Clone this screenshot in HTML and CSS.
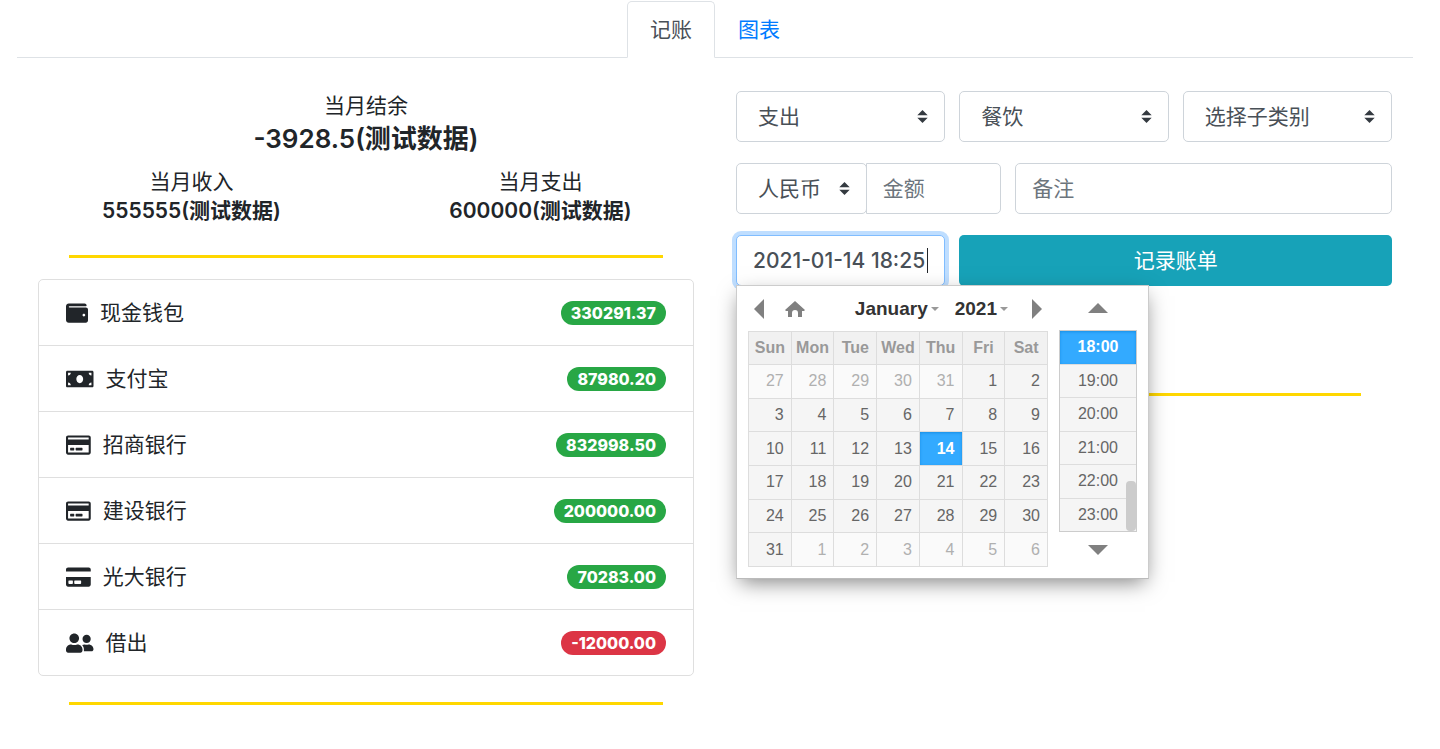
FILE: index.html
```html
<!DOCTYPE html>
<html lang="zh-CN">
<head>
  <meta charset="UTF-8">
  <meta name="viewport" content="width=device-width, initial-scale=1">
  <title>记账</title>
  <link rel="stylesheet" href="styles.css">
</head>
<body>

<nav class="nav-tabs">
  <a class="nav-link active" href="#bill">记账</a>
  <a class="nav-link" href="#chart">图表</a>
</nav>

<main class="row">
  <section class="col">
    <div class="stat">
      <div>当月结余</div>
      <h4>-3928.5(测试数据)</h4>
    </div>
    <div class="stat-row">
      <div class="stat">
        <div>当月收入</div>
        <h5>555555(测试数据)</h5>
      </div>
      <div class="stat">
        <div>当月支出</div>
        <h5>600000(测试数据)</h5>
      </div>
    </div>

    <hr>

    <ul class="list-group">
      <li>
        <svg class="icon" viewBox="0 0 512 512"><path d="M461.2 128H80c-8.84 0-16-7.16-16-16s7.16-16 16-16h384c8.84 0 16-7.16 16-16 0-26.51-21.49-48-48-48H64C28.65 32 0 60.65 0 96v320c0 35.35 28.65 64 64 64h397.2c28.02 0 50.8-21.53 50.8-48V176c0-26.47-22.78-48-50.8-48zM416 336c-17.67 0-32-14.33-32-32s14.33-32 32-32 32 14.33 32 32-14.33 32-32 32z"/></svg>
        <span>现金钱包</span>
        <span class="badge">330291.37</span>
      </li>
      <li>
        <svg class="icon" viewBox="0 0 640 512"><path d="M608 64H32C14.33 64 0 78.33 0 96v320c0 17.67 14.33 32 32 32h576c17.67 0 32-14.33 32-32V96c0-17.67-14.33-32-32-32zM48 400v-64c35.35 0 64 28.65 64 64H48zm0-224v-64h64c0 35.35-28.65 64-64 64zm272 176c-44.19 0-80-42.99-80-96 0-53.02 35.82-96 80-96s80 42.98 80 96c0 53.03-35.83 96-80 96zm272 48h-64c0-35.35 28.65-64 64-64v64zm0-224c-35.35 0-64-28.65-64-64h64v64z"/></svg>
        <span>支付宝</span>
        <span class="badge">87980.20</span>
      </li>
      <li>
        <svg class="icon" viewBox="0 0 576 512"><path d="M527.9 32H48.1C21.5 32 0 53.5 0 80v352c0 26.5 21.5 48 48.1 48h479.8c26.6 0 48.1-21.5 48.1-48V80c0-26.5-21.5-48-48.1-48zM54.1 80h467.8c3.3 0 6 2.7 6 6v42H48.1V86c0-3.3 2.7-6 6-6zm467.8 352H54.1c-3.3 0-6-2.7-6-6V256h479.8v170c0 3.3-2.7 6-6 6zM192 332v40c0 6.6-5.4 12-12 12h-72c-6.6 0-12-5.4-12-12v-40c0-6.6 5.4-12 12-12h72c6.6 0 12 5.4 12 12zm192 0v40c0 6.6-5.4 12-12 12H236c-6.6 0-12-5.4-12-12v-40c0-6.6 5.4-12 12-12h136c6.6 0 12 5.4 12 12z"/></svg>
        <span>招商银行</span>
        <span class="badge">832998.50</span>
      </li>
      <li>
        <svg class="icon" viewBox="0 0 576 512"><path d="M527.9 32H48.1C21.5 32 0 53.5 0 80v352c0 26.5 21.5 48 48.1 48h479.8c26.6 0 48.1-21.5 48.1-48V80c0-26.5-21.5-48-48.1-48zM54.1 80h467.8c3.3 0 6 2.7 6 6v42H48.1V86c0-3.3 2.7-6 6-6zm467.8 352H54.1c-3.3 0-6-2.7-6-6V256h479.8v170c0 3.3-2.7 6-6 6zM192 332v40c0 6.6-5.4 12-12 12h-72c-6.6 0-12-5.4-12-12v-40c0-6.6 5.4-12 12-12h72c6.6 0 12 5.4 12 12zm192 0v40c0 6.6-5.4 12-12 12H236c-6.6 0-12-5.4-12-12v-40c0-6.6 5.4-12 12-12h136c6.6 0 12 5.4 12 12z"/></svg>
        <span>建设银行</span>
        <span class="badge">200000.00</span>
      </li>
      <li>
        <svg class="icon" viewBox="0 0 576 512"><path d="M0 432c0 26.5 21.5 48 48 48h480c26.5 0 48-21.5 48-48V256H0v176zm192-84c0-6.600 5.400-12 12-12h136c6.600 0 12 5.400 12 12v56c0 6.600-5.400 12-12 12H204c-6.600 0-12-5.400-12-12v-56zm-136 0c0-6.600 5.400-12 12-12h80c6.600 0 12 5.400 12 12v56c0 6.600-5.400 12-12 12H68c-6.600 0-12-5.400-12-12v-56zM576 80v48H0V80c0-26.5 21.5-48 48-48h480c26.5 0 48 21.5 48 48z"/></svg>
        <span>光大银行</span>
        <span class="badge">70283.00</span>
      </li>
      <li>
        <svg class="icon" viewBox="0 0 640 512"><path d="M192 256c61.9 0 112-50.1 112-112S253.9 32 192 32 80 82.1 80 144s50.1 112 112 112zm76.8 32h-8.3c-20.8 10-43.9 16-68.5 16s-47.6-6-68.5-16h-8.3C51.6 288 0 339.6 0 403.2V432c0 26.5 21.5 48 48 48h288c26.5 0 48-21.5 48-48v-28.8c0-63.6-51.6-115.2-115.2-115.2zM480 256c53 0 96-43 96-96s-43-96-96-96-96 43-96 96 43 96 96 96zm48 32h-3.8c-13.9 4.8-28.6 8-44.2 8s-30.3-3.2-44.2-8H432c-20.4 0-39.2 5.9-55.7 15.4 24.4 26.3 39.7 61.2 39.7 99.8v38.4c0 2.2-.5 4.3-.6 6.4H592c26.5 0 48-21.5 48-48 0-61.9-50.1-112-112-112z"/></svg>
        <span>借出</span>
        <span class="badge badge-danger">-12000.00</span>
      </li>
    </ul>

    <hr>
  </section>

  <section class="col">
    <form class="bill-form" onsubmit="event.preventDefault();">
      <select class="form-control span-4" aria-label="类型">
        <option>支出</option>
        <option>收入</option>
      </select>
      <select class="form-control span-4" aria-label="类别">
        <option>餐饮</option>
      </select>
      <select class="form-control span-4" aria-label="子类别">
        <option>选择子类别</option>
      </select>

      <div class="input-group span-5">
        <select class="form-control" aria-label="币种">
          <option>人民币</option>
        </select>
        <input class="form-control" type="text" placeholder="金额" aria-label="金额">
      </div>
      <input class="form-control span-7" type="text" placeholder="备注" aria-label="备注">

      <div class="date-box span-4">
        <input class="form-control focus" type="text" value="2021-01-14 18:25" aria-label="时间">
        <span class="caret"></span>

        <div class="datetimepicker">
          <div class="datepicker">
            <div class="monthpicker">
              <button type="button" aria-label="上个月"><svg width="10" height="20" viewBox="0 0 10 20"><path d="M10 0v20L0 10z"/></svg></button>
              <button type="button" aria-label="今天"><svg width="20" height="18" viewBox="0 0 20 18"><path d="M10 1L0 10l1 1h2v6h4v-4c0-2 1-3 3-3s3 1 3 3v4h4v-6h2l1-1z"/></svg></button>
              <div class="labels">
                <button type="button">January<i></i></button>
                <button type="button">2021<i></i></button>
              </div>
              <button type="button" aria-label="下个月"><svg width="10" height="20" viewBox="0 0 10 20"><path d="M0 0v20l10-10z"/></svg></button>
            </div>
            <table class="calendar">
              <thead>
                <tr><th>Sun</th><th>Mon</th><th>Tue</th><th>Wed</th><th>Thu</th><th>Fri</th><th>Sat</th></tr>
              </thead>
              <tbody>
                <tr><td class="other">27</td><td class="other">28</td><td class="other">29</td><td class="other">30</td><td class="other">31</td><td>1</td><td>2</td></tr>
                <tr><td>3</td><td>4</td><td>5</td><td>6</td><td>7</td><td>8</td><td>9</td></tr>
                <tr><td>10</td><td>11</td><td>12</td><td>13</td><td class="current">14</td><td>15</td><td>16</td></tr>
                <tr><td>17</td><td>18</td><td>19</td><td>20</td><td>21</td><td>22</td><td>23</td></tr>
                <tr><td>24</td><td>25</td><td>26</td><td>27</td><td>28</td><td>29</td><td>30</td></tr>
                <tr><td>31</td><td class="other">1</td><td class="other">2</td><td class="other">3</td><td class="other">4</td><td class="other">5</td><td class="other">6</td></tr>
              </tbody>
            </table>
          </div>

          <div class="timepicker">
            <button class="step" type="button" aria-label="更早"><svg width="20" height="10" viewBox="0 0 20 10"><path d="M0 10h20L10 0z"/></svg></button>
            <div class="time-box">
              <button class="current" type="button">18:00</button>
              <button type="button">19:00</button>
              <button type="button">20:00</button>
              <button type="button">21:00</button>
              <button type="button">22:00</button>
              <button type="button">23:00</button>
              <span class="scroller"></span>
            </div>
            <button class="step" type="button" aria-label="更晚"><svg width="20" height="10" viewBox="0 0 20 10"><path d="M0 0h20L10 10z"/></svg></button>
          </div>
        </div>
      </div>
      <button class="btn span-8" type="submit">记录账单</button>
    </form>

    <hr>
  </section>
</main>

</body>
</html>
```
FILE: styles.css
```css
* {
  box-sizing: border-box;
}

body {
  margin: 0;
  padding: 1px 27px 0 17px;
  background: #fff;
  color: #212529;
  font-family: Inter, "Noto Sans CJK SC", sans-serif;
  font-size: 21px;
  line-height: 32px;
}

button,
input,
select {
  margin: 0;
  font: inherit;
}

h4,
h5 {
  margin: 0;
  font-weight: 600;
}

h4 {
  margin-bottom: 10px;
  font-size: 26px;
  line-height: 34px;
}

h5 {
  margin-bottom: 10px;
  font-size: 21px;
  line-height: 26px;
}

hr {
  height: 3px;
  margin: 21px 31px;
  border: 0;
  background: #ffd700;
}

/* tabs */
.nav-tabs {
  display: flex;
  justify-content: center;
  border-bottom: 1px solid #dee2e6;
}

.nav-link {
  margin-bottom: -1px;
  padding: 12px 22px 11px;
  border: 1px solid transparent;
  border-radius: 5px 5px 0 0;
  color: #007bff;
  text-decoration: none;
}

.nav-link.active {
  border-color: #dee2e6 #dee2e6 #fff;
  background: #fff;
  color: #495057;
}

.row {
  display: grid;
  grid-template-columns: 1fr 1fr;
  margin-top: 32px;
}

.col {
  min-width: 0;
  padding: 0 21px;
}

/* month summary */
.stat {
  text-align: center;
}

.stat-row {
  display: grid;
  grid-template-columns: 1fr 1fr;
  margin: 0 -21px;
}

/* accounts */
.list-group {
  margin: 0 0 26px;
  padding: 0;
  border: 1px solid #dfdfdf;
  border-radius: 5px;
  list-style: none;
}

.list-group li {
  display: flex;
  align-items: center;
  gap: 12px;
  padding: 17px 27px 16px;
}

.list-group li + li {
  border-top: 1px solid #dfdfdf;
}

.icon {
  height: 22px;
  fill: #212529;
}

.badge {
  margin-left: auto;
  padding: 4px 10px;
  border-radius: 12px;
  background: #28a745;
  color: #fff;
  font-size: 16px;
  font-weight: 800;
  line-height: 16px;
}

.badge-danger {
  background: #dc3545;
}

/* bill form */
.bill-form {
  display: grid;
  grid-template-columns: repeat(12, 1fr);
  gap: 21px 14px;
  margin-bottom: 107px;
  padding-top: 1px;
}

.span-4 { grid-column: span 4; }
.span-5 { grid-column: span 5; }
.span-7 { grid-column: span 7; }
.span-8 { grid-column: span 8; }

.form-control {
  width: 100%;
  min-width: 0;
  height: 51px;
  padding: 8px 16px;
  border: 1px solid #ced4da;
  border-radius: 5px;
  outline: 0;
  background: #fff;
  color: #495057;
}

.form-control::placeholder {
  color: #6c757d;
  opacity: 1;
}

.form-control.focus {
  border-color: #80bdff;
  box-shadow: 0 0 0 4px rgba(0, 123, 255, .25);
  caret-color: transparent;
  font-weight: 500;
}

select.form-control {
  appearance: none;
  padding: 8px 36px 8px 21px;
  background: #fff url("data:image/svg+xml,%3Csvg xmlns='http://www.w3.org/2000/svg' viewBox='0 0 4 5'%3E%3Cpath fill='%23343a40' d='M2 0L0 2h4zm0 5L0 3h4z'/%3E%3C/svg%3E") no-repeat right 16px center / 11px 13px;
}

.input-group {
  display: flex;
}

.input-group select {
  flex: 1 1 131px;
}

.input-group input {
  flex: 1 1 136px;
  margin-left: -1px;
  border-radius: 0 5px 5px 0;
}

.btn {
  border: 0;
  border-radius: 5px;
  background: #17a2b8;
  color: #fff;
  cursor: pointer;
}

.date-box {
  position: relative;
}

.caret {
  position: absolute;
  top: 13px;
  right: 17px;
  width: 1px;
  height: 25px;
  background: #212529;
}

/* date time popup */
.datetimepicker {
  position: absolute;
  top: 50px;
  left: 0;
  z-index: 10;
  display: flex;
  align-items: flex-start;
  gap: 11px;
  padding: 0 11px 11px;
  border: 1px solid #bbb;
  border-color: #ccc #ccc #bbb;
  background: #fff;
  box-shadow: 0 7px 20px -4px rgba(0, 0, 0, .5);
  color: #666;
  font-family: "Liberation Sans", Arial, sans-serif;
  font-size: 16px;
  line-height: 20px;
}

.datetimepicker button {
  padding: 0;
  border: 0;
  background: none;
  color: inherit;
  cursor: pointer;
}

.datetimepicker svg {
  display: block;
  fill: #808080;
}

.datepicker {
  width: 300px;
}

.monthpicker {
  display: flex;
  align-items: center;
  gap: 21px;
  height: 45px;
  padding: 0 6px;
}

.labels {
  display: flex;
  gap: 16px;
  margin-right: 3px;
  margin-left: auto;
  color: #333;
  font-size: 19px;
  font-weight: 700;
}

.labels i {
  display: inline-block;
  margin-left: 3px;
  border: 4px solid transparent;
  border-top-color: #999;
  border-bottom: 0;
  vertical-align: middle;
}

.calendar {
  width: 100%;
  height: 236px;
  border-collapse: collapse;
  table-layout: fixed;
}

.calendar th,
.calendar td {
  height: 33px;
  padding: 0 7px 0 0;
  border: 1px solid #ddd;
  background: #f5f5f5;
  text-align: right;
}

.calendar th {
  padding: 0;
  background: #f1f1f1;
  color: #999;
  text-align: center;
}

.calendar td.other {
  background: #fafafa;
  color: #b0b0b0;
}

.calendar td.current,
.timepicker .time-box .current {
  background: #33aaff;
  box-shadow: inset 0 1px 3px #178fe5;
  color: #fff;
  font-weight: 700;
}

.timepicker {
  width: 78px;
}

.timepicker .step {
  display: flex;
  justify-content: center;
  align-items: center;
  width: 100%;
  height: 44px;
}

.timepicker .step:last-child {
  height: 35px;
}

.time-box {
  position: relative;
  display: flex;
  flex-direction: column;
  height: 202px;
  border: 1px solid #ccc;
}

.timepicker .time-box button {
  flex: 1;
  border-bottom: 1px solid #ddd;
  background: #f5f5f5;
}

.timepicker .time-box button:last-of-type {
  border-bottom: 0;
}

.scroller {
  position: absolute;
  right: 0;
  bottom: 0;
  width: 10px;
  height: 50px;
  border-radius: 4px;
  background: #ccc;
}
```
